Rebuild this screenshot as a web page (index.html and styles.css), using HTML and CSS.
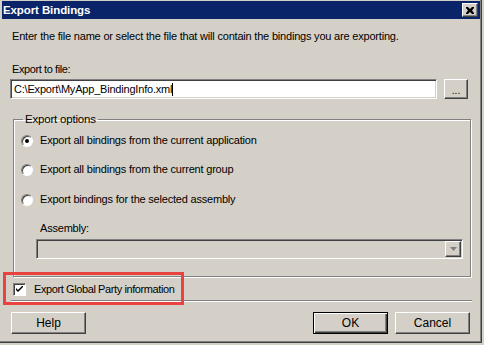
FILE: index.html
```html
<!DOCTYPE html>
<html lang="en">
<head>
<meta charset="UTF-8">
<meta name="viewport" content="width=device-width, initial-scale=1.0">
<title>Export Bindings</title>
<link rel="stylesheet" href="styles.css">
</head>
<body>
  <div class="window">
    <div class="titlebar">
      <span class="title">Export Bindings</span>
      <span class="close">
        <svg width="8" height="7" viewBox="0 0 8 7"><path d="M0 0h2l2 2 2-2h2v1l-2 2.5 2 2.5v1h-2l-2-2-2 2h-2v-1l2-2.5-2-2.5z" fill="#000"/></svg>
      </span>
    </div>

    <div class="content">
      <p class="intro">Enter the file name or select the file that will contain the bindings you are exporting.</p>

      <div class="label">Export to file:</div>
      <div class="filerow">
        <div class="textbox">C:\Export\MyApp_BindingInfo.xml<span class="caret"></span></div>
        <div class="btn browse">...</div>
      </div>

      <fieldset class="group">
        <legend>Export options</legend>
        <div class="option"><span class="radio checked"></span>Export all bindings from the current application</div>
        <div class="option"><span class="radio"></span>Export all bindings from the current group</div>
        <div class="option"><span class="radio"></span>Export bindings for the selected assembly</div>
        <div class="sublabel">Assembly:</div>
        <div class="combo">
          <span class="drop">
            <svg width="7" height="4" viewBox="0 0 7 4"><path d="M0 0h7l-3.5 4z" fill="#808080"/></svg>
          </span>
        </div>
      </fieldset>

      <div class="checkrow">
        <span class="checkbox">
          <svg width="7" height="7" viewBox="0 0 7 7"><path d="M0 2l2 2 5-5v2l-5 5-2-2z" fill="#000"/></svg>
        </span>
        Export Global Party information
      </div>

      <div class="separator"></div>

      <div class="buttons">
        <div class="btn">Help</div>
        <div class="right">
          <div class="btn default">OK</div>
          <div class="btn">Cancel</div>
        </div>
      </div>
    </div>

    <!-- annotation around the checkbox -->
    <div class="highlight"></div>
  </div>
</body>
</html>
```

FILE: styles.css
```css
body {
  margin: 0;
  background: #d4d0c8;
  font-family: "Liberation Sans", Arial, sans-serif;
  font-size: 11px;
  letter-spacing: -0.2px;
  color: #000;
}

.window {
  position: relative;
  width: 482px;
  height: 343px;
  box-sizing: border-box;
  background: #d4d0c8;
  border-right: 1px solid #404040;
  border-bottom: 1px solid #404040;
  box-shadow: inset -1px -1px 0 #808080;
  padding: 1px 1px 0 2px;
}

/* title bar */
.titlebar {
  height: 18px;
  background: #0a246a;
  display: flex;
  align-items: center;
  justify-content: space-between;
  padding: 0 2px 0 1px;
}

.title {
  color: #fff;
  font-weight: bold;
  font-size: 11.5px;
  letter-spacing: -0.1px;
}

.close {
  width: 16px;
  height: 14px;
  box-sizing: border-box;
  background: #d4d0c8;
  border: 1px solid;
  border-color: #fff #404040 #404040 #fff;
  box-shadow: inset -1px -1px 0 #808080;
  display: flex;
  align-items: center;
  justify-content: center;
}

/* dialog body */
.content {
  padding: 0 10px 0 8px;
}

.intro {
  margin: 11px 0 0 2px;
  line-height: 13px;
}

.label {
  margin: 20px 0 0 2px;
  line-height: 13px;
  letter-spacing: -0.4px;
}

.filerow {
  display: flex;
  gap: 7px;
  margin-top: 3px;
}

.textbox {
  width: 427px;
  height: 20px;
  box-sizing: border-box;
  background: #fff;
  border: 1px solid;
  border-color: #808080 #fff #fff #808080;
  box-shadow: inset 1px 1px 0 #404040, inset -1px -1px 0 #d4d0c8;
  padding: 3px 0 0 3px;
  line-height: 13px;
  white-space: nowrap;
}

.caret {
  display: inline-block;
  width: 1px;
  height: 13px;
  background: #000;
  vertical-align: top;
}

.btn {
  height: 22px;
  box-sizing: border-box;
  background: #d4d0c8;
  border: 1px solid;
  border-color: #fff #404040 #404040 #fff;
  box-shadow: inset -1px -1px 0 #808080;
  display: flex;
  align-items: center;
  justify-content: center;
  width: 75px;
  font-size: 12px;
  letter-spacing: 0;
}

.browse {
  width: 24px;
  height: 20px;
  font-size: 10px;
  padding-top: 2px;
}

/* group box */
.group {
  margin: 14px 0 0 3px;
  width: 458px;
  box-sizing: border-box;
  border: 1px solid #808080;
  box-shadow: 1px 1px 0 #fff, inset 1px 1px 0 #fff;
  padding: 8px 0 17px 7px;
}

.group legend {
  padding: 0 2px;
  margin-left: 2px;
  line-height: 13px;
  font-size: 11.5px;
}

.option {
  display: flex;
  align-items: center;
  gap: 7px;
  line-height: 13px;
  margin-bottom: 16px;
}

.option:nth-of-type(2) {
  margin-bottom: 17px;
}

.radio {
  position: relative;
  width: 12px;
  height: 12px;
  box-sizing: border-box;
  border-radius: 50%;
  background: #fff;
  border: 1px solid;
  border-color: #808080 #fff #fff #808080;
  box-shadow: inset 1px 1px 0 #404040;
}

.radio.checked::after {
  content: "";
  position: absolute;
  left: 3px;
  top: 3px;
  width: 4px;
  height: 4px;
  border-radius: 50%;
  background: #000;
}

.sublabel {
  margin: 10px 0 0 19px;
  line-height: 13px;
}

.combo {
  margin: 4px 0 0 15px;
  width: 427px;
  height: 20px;
  box-sizing: border-box;
  background: #d4d0c8;
  border: 1px solid;
  border-color: #808080 #fff #fff #808080;
  box-shadow: inset 1px 1px 0 #404040;
  display: flex;
  justify-content: flex-end;
  padding: 1px 1px 1px 0;
}

.drop {
  width: 16px;
  box-sizing: border-box;
  border: 1px solid;
  border-color: #fff #404040 #404040 #fff;
  box-shadow: inset -1px -1px 0 #808080;
  display: flex;
  align-items: center;
  justify-content: center;
}

/* bottom area */
.checkrow {
  display: flex;
  align-items: center;
  gap: 8px;
  margin: 6px 0 0 3px;
  line-height: 13px;
  font-size: 11px;
  letter-spacing: -0.4px;
}

.checkbox {
  width: 13px;
  height: 13px;
  box-sizing: border-box;
  background: #fff;
  border: 1px solid;
  border-color: #808080 #fff #fff #808080;
  box-shadow: inset 1px 1px 0 #404040;
  display: flex;
  align-items: center;
  justify-content: center;
}

.separator {
  margin: 4px -2px 0 1px;
  border-top: 1px solid #808080;
  border-bottom: 1px solid #fff;
}

.buttons {
  display: flex;
  justify-content: space-between;
  margin: 10px 0 0 1px;
}

.right {
  display: flex;
  gap: 7px;
}

.btn.default {
  border: 1px solid #000;
  box-shadow: inset 1px 1px 0 #fff, inset -1px -1px 0 #404040, inset -2px -2px 0 #808080;
}

.highlight {
  position: absolute;
  left: 3px;
  top: 272px;
  width: 181px;
  height: 33px;
  box-sizing: border-box;
  border: 3px solid #e8433f;
}
```
